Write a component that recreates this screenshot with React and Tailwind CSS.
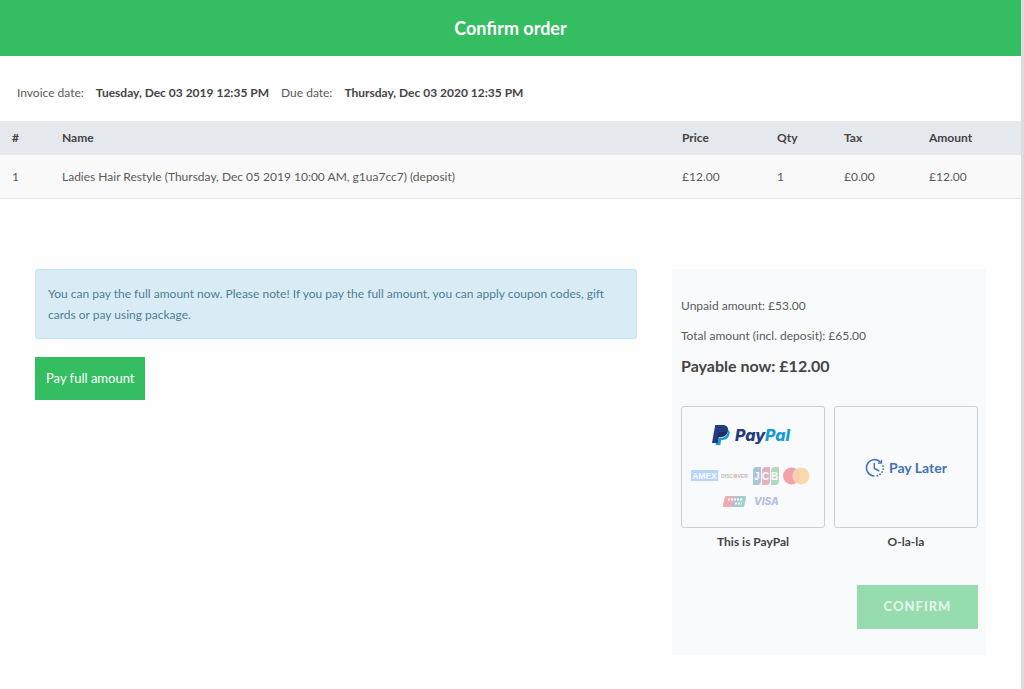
import { useState } from 'react';

const columns = [
  { key: 'id', label: '#', width: 'w-[50px]' },
  { key: 'name', label: 'Name', width: '' },
  { key: 'price', label: 'Price', width: 'w-[95px]' },
  { key: 'qty', label: 'Qty', width: 'w-[67px]' },
  { key: 'tax', label: 'Tax', width: 'w-[85px]' },
  { key: 'amount', label: 'Amount', width: 'w-[104px]' },
];

const items = [
  {
    id: '1',
    name: 'Ladies Hair Restyle (Thursday, Dec 05 2019 10:00 AM, g1ua7cc7) (deposit)',
    price: '£12.00',
    qty: '1',
    tax: '£0.00',
    amount: '£12.00',
  },
];

function PayPalLogo() {
  return (
    <svg viewBox="0 0 126 94" className="h-[94px] w-[126px] overflow-visible" aria-hidden="true">
      <g transform="translate(22 5)">
        <path d="M3.200 0H10c4 0 6.600 1.800 6 5.600C15.300 10 12.500 12.300 8.300 12.300H6.200L5.100 18H0Z" fill="#253b80" />
        <path d="M16.300 4.800c1.200 1 1.500 2.500 1.200 4.300-.8 4-3.400 5.800-7.200 5.800H9.200L8.300 20H3.500l.4-2h1.800l1-5.200h2.100c4.100 0 6.900-2.500 7.500-8Z" fill="#179bd7" />
        <path d="M15.900 6c-.8 3.600-3.600 5.400-7.400 5.400H6.800L5.700 18H4.500l1.600-9.500c.2-1 .8-1.500 1.800-1.500h3.600c2 0 3.600-.4 4.400-1Z" fill="#222d65" />
      </g>
      <text x="45" y="21" fontFamily="Inter, sans-serif" fontSize="16" fontWeight="800" fontStyle="italic" fill="#253b80">
        Pay<tspan fill="#179bd7">Pal</tspan>
      </text>
      <g opacity="0.35">
        <rect x="1" y="50" width="27" height="11" fill="#3d91ff" />
        <text x="14.500" y="59" textAnchor="middle" fontFamily="Liberation Sans, sans-serif" fontSize="8.500" fontWeight="700" fill="#fff">AMEX</text>
        <text x="31" y="57.600" fontFamily="Liberation Sans, sans-serif" fontSize="5" fontWeight="700" fill="#444">DISC</text>
        <circle cx="45.500" cy="56" r="2.200" fill="#f05a20" />
        <text x="47.500" y="57.600" fontFamily="Liberation Sans, sans-serif" fontSize="5" fontWeight="700" fill="#444">VER</text>
        <path d="M67 47h4v14q0 4-4 4h-4V51q0-4 4-4Z" fill="#1d5f9f" />
        <path d="M76 47h4v14q0 4-4 4h-4V51q0-4 4-4Z" fill="#c32f45" />
        <path d="M85 47h4v14q0 4-4 4h-4V51q0-4 4-4Z" fill="#2f9d4e" />
        <text x="64" y="59.500" fontFamily="Liberation Sans, sans-serif" fontSize="10" fontWeight="700" fill="#fff">J</text>
        <text x="72" y="59.500" fontFamily="Liberation Sans, sans-serif" fontSize="10" fontWeight="700" fill="#fff">C</text>
        <text x="81" y="59.500" fontFamily="Liberation Sans, sans-serif" fontSize="10" fontWeight="700" fill="#fff">B</text>
        <circle cx="101.500" cy="56" r="8.500" fill="#eb001b" />
        <circle cx="111" cy="56" r="8.500" fill="#f79e1b" />
        <path d="M106.250 49a8.500 8.500 0 0 1 0 14 8.500 8.500 0 0 1 0-14Z" fill="#f4803a" />
        <path d="M36 76h9l-2.500 11h-8.500q-1.500 0-1-2l1.800-8q.4-1 1.200-1Z" fill="#e21836" />
        <path d="M44 76h7l-2.500 11H41.500Z" fill="#335f80" />
        <path d="M50 76h5q1.500 0 1 2l-1.800 8q-.4 1-1.200 1h-5.500Z" fill="#00847e" />
        <path d="M38 79.500h14" stroke="#fff" strokeWidth="2" strokeDasharray="2 1" />
        <path d="M45 83.500h7" stroke="#fff" strokeWidth="2" strokeDasharray="2 1" />
        <text x="64" y="85" fontFamily="Inter, sans-serif" fontSize="10" fontWeight="800" fontStyle="italic" fill="#3852a4">VISA</text>
      </g>
    </svg>
  );
}

function PayLaterLogo() {
  return (
    <svg viewBox="0 0 82 24" className="h-6 w-[82px]" fill="none" stroke="#4570b8" aria-hidden="true">
      <g transform="translate(1 3)">
        <path d="M14.500 4A8.200 8.200 0 1 0 8.500 18" strokeWidth="1.600" />
        <path d="M15.500 1.800v3.200h-3.500" strokeWidth="1.300" />
        <path d="M10.500 18A8.200 8.200 0 0 0 16.500 6.500" strokeWidth="1.500" strokeDasharray="1.700 1.400" />
        <path d="M8.300 5v5.500l5 2.500" strokeWidth="1.400" />
        <text x="23" y="15" fontFamily="Lato, sans-serif" fontSize="14" fontWeight="700" fill="#4570b8" stroke="none">
          Pay Later
        </text>
      </g>
    </svg>
  );
}

const methods = [
  { id: 'paypal', label: 'This is PayPal', Logo: PayPalLogo },
  { id: 'later', label: 'O-la-la', Logo: PayLaterLogo },
];

export default function App() {
  const [method, setMethod] = useState('');

  return (
    <div className="min-h-screen border-r-[3px] border-[#dcdcdc] bg-[#fefefe] font-['Lato',sans-serif] text-[12px] leading-[21px] text-[#5a5a5a]">
      <header className="flex h-14 items-center justify-center bg-[#34bd61]">
        <h1 className="text-[18px] font-bold text-white">Confirm order</h1>
      </header>

      <dl className="flex flex-wrap items-center gap-x-3 px-[17px] pt-[26px] pb-[18px]">
        <dt>Invoice date:</dt>
        <dd className="font-bold text-[#444]">Tuesday, Dec 03 2019 12:35 PM</dd>
        <dt>Due date:</dt>
        <dd className="font-bold text-[#444]">Thursday, Dec 03 2020 12:35 PM</dd>
      </dl>

      <table className="w-full table-fixed border-collapse text-left">
        <thead>
          <tr className="h-[34px] bg-[#e5e8ed] text-[#444]">
            {columns.map((c) => (
              <th key={c.key} scope="col" className={`${c.width} pb-0.5 pl-3 font-bold`}>{c.label}</th>
            ))}
          </tr>
        </thead>
        <tbody>
          {items.map((item) => (
            <tr key={item.id} className="h-[43px] border-b border-[#e6e8eb] bg-[#f9f9f9]">
              {columns.map((c) => (
                <td key={c.key} className="pl-3">{item[c.key]}</td>
              ))}
            </tr>
          ))}
        </tbody>
      </table>

      <main className="flex items-start gap-[35px] px-[35px] pt-[70px] pb-8">
        <section className="min-w-0 flex-1">
          <p className="rounded-[3px] border border-[#bfe5ed] bg-[#d9ecf5] px-3 py-[13px] text-[#4e7e97]">
            You can pay the full amount now. Please note! If you pay the full amount, you can apply coupon codes, gift
            cards or pay using package.
          </p>
          <button type="button" className="mt-[18px] h-[43px] bg-[#34bd61] px-[11px] text-[13px] text-white">
            Pay full amount
          </button>
        </section>

        <form className="w-[314px] shrink-0 bg-[#f8fafc] py-[26px] pr-2 pl-[9px]" onSubmit={(e) => e.preventDefault()}>
          <p className="leading-[22px]">Unpaid amount: £53.00</p>
          <p className="mt-2 leading-[22px]">Total amount (incl. deposit): £65.00</p>
          <p className="mt-2 text-[16px] leading-[22px] font-bold text-[#444]">Payable now: £12.00</p>

          <fieldset aria-label="Payment method" className="mt-[29px] grid grid-cols-2 gap-[9px]">
            {methods.map(({ id, label, Logo }) => (
              <label key={id} className="relative cursor-pointer text-center font-bold text-[#444]">
                <input
                  type="radio"
                  name="method"
                  value={id}
                  checked={method === id}
                  onChange={() => setMethod(id)}
                  className="peer sr-only"
                />
                <span className="mb-[3px] flex h-[122px] items-center justify-center rounded-[3px] border border-[#cbd0d4] peer-checked:border-[#34bd61]">
                  <Logo />
                </span>
                {label}
              </label>
            ))}
          </fieldset>

          <div className="mt-[33px] flex justify-end">
            <button
              type="submit"
              disabled={!method}
              className="h-11 w-[121px] bg-[#34bd61] text-[13px] font-bold tracking-[1px] text-white disabled:bg-[#97dcaf] disabled:text-[#e6f8ec]"
            >
              CONFIRM
            </button>
          </div>
        </form>
      </main>
    </div>
  );
}
